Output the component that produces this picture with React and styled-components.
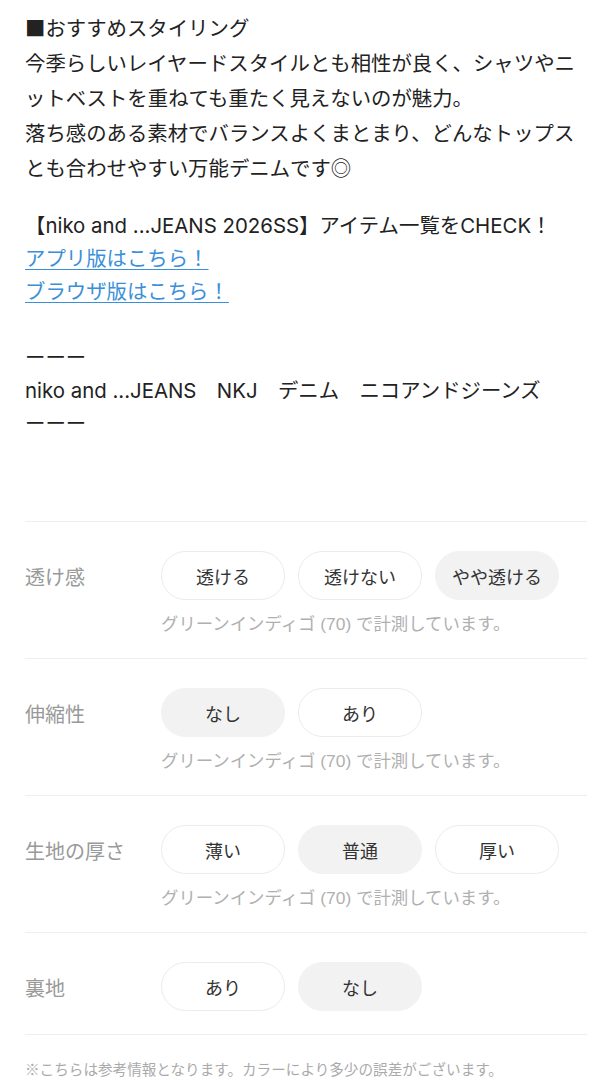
import React from "react";
import styled, { createGlobalStyle } from "styled-components";

const GlobalStyle = createGlobalStyle`
  body {
    margin: 0;
    background: #fff;
    font-family: "Liberation Sans", "Noto Sans CJK JP", sans-serif;
    color: #222;
  }
`;

const specs = [
  {
    label: "透け感",
    options: ["透ける", "透けない", "やや透ける"],
    selected: 2,
    note: true,
  },
  { label: "伸縮性", options: ["なし", "あり"], selected: 0, note: true },
  {
    label: "生地の厚さ",
    options: ["薄い", "普通", "厚い"],
    selected: 1,
    note: true,
  },
  { label: "裏地", options: ["あり", "なし"], selected: 1, note: false },
];

const App = () => {
  return (
    <>
      <GlobalStyle />
      <StyledPage>
        <Description>
          <Lead>
            <Wide>■</Wide>おすすめスタイリング
            <br />
            今季らしいレイヤードスタイルとも相性が良く、シャツやニ
            <br />
            ットベストを重ねても重たく見えないのが魅力。
            <br />
            落ち感のある素材でバランスよくまとまり、どんなトップス
            <br />
            とも合わせやすい万能デニムです◎
          </Lead>
          <Info>
            <div>【niko and ...JEANS 2026SS】アイテム一覧をCHECK！</div>
            <div>
              <TextLink href="#">アプリ版はこちら！</TextLink>
            </div>
            <div>
              <TextLink href="#">ブラウザ版はこちら！</TextLink>
            </div>
            <div>&nbsp;</div>
            <div>ーーー</div>
            <div>niko and ...JEANS　NKJ　デニム　ニコアンドジーンズ</div>
            <div>ーーー</div>
          </Info>
        </Description>

        <SpecList>
          {specs.map((spec) => (
            <SpecRow key={spec.label}>
              <SpecLabel>{spec.label}</SpecLabel>
              <SpecBody>
                <ChipRow>
                  {spec.options.map((opt, i) => (
                    <Chip key={opt} $active={i === spec.selected}>
                      {opt}
                    </Chip>
                  ))}
                </ChipRow>
                {spec.note && (
                  <SpecNote>グリーンインディゴ (70) で計測しています。</SpecNote>
                )}
              </SpecBody>
            </SpecRow>
          ))}
          <Footnote>
            ※こちらは参考情報となります。カラーにより多少の誤差がございます。
          </Footnote>
        </SpecList>
      </StyledPage>
    </>
  );
};

const StyledPage = styled.div`
  width: 614px;
  min-height: 1080px;
  background: #fff;
`;

const Description = styled.div`
  padding: 10px 25px 0;
  font-family: "Inter", "Noto Sans CJK JP", sans-serif;
  font-size: 20.4px;
`;

const Lead = styled.p`
  margin: 0;
  line-height: 35px;
`;

const Wide = styled.span`
  font-family: "Noto Sans CJK JP", sans-serif;
`;

const Info = styled.div`
  margin-top: 23px;
  line-height: 33px;
`;

const TextLink = styled.a`
  color: #3b8fd8;
  text-decoration: underline;
  text-decoration-thickness: 1px;
  text-underline-offset: 3px;
`;

const SpecList = styled.div`
  margin: 81px 25px 0;
  width: 562px;
`;

const SpecRow = styled.div`
  display: grid;
  grid-template-columns: 136px 1fr;
  padding: 29px 0 23px;
  border-top: 1px solid #eeeeee;
`;

const SpecLabel = styled.div`
  box-sizing: border-box;
  height: 49px;
  padding-top: 3px;
  font-size: 20px;
  line-height: 49px;
  color: #999;
`;

const SpecBody = styled.div`
  display: flex;
  flex-direction: column;
`;

const ChipRow = styled.div`
  display: flex;
  gap: 13px;
`;

const Chip = styled.div`
  width: 124px;
  height: 49px;
  box-sizing: border-box;
  display: flex;
  align-items: center;
  justify-content: center;
  border-radius: 25px;
  border: 1px solid ${(p) => (p.$active ? "#f2f2f2" : "#ebebeb")};
  background: ${(p) => (p.$active ? "#f2f2f2" : "#fff")};
  color: #333;
  font-size: 18px;
`;

const SpecNote = styled.div`
  margin-top: 14px;
  font-size: 17.4px;
  line-height: 21px;
  color: #b0b0b0;
`;

const Footnote = styled.div`
  border-top: 1px solid #eeeeee;
  padding-top: 26px;
  font-size: 14.6px;
  line-height: 18px;
  color: #aaa;
`;

export default App;
